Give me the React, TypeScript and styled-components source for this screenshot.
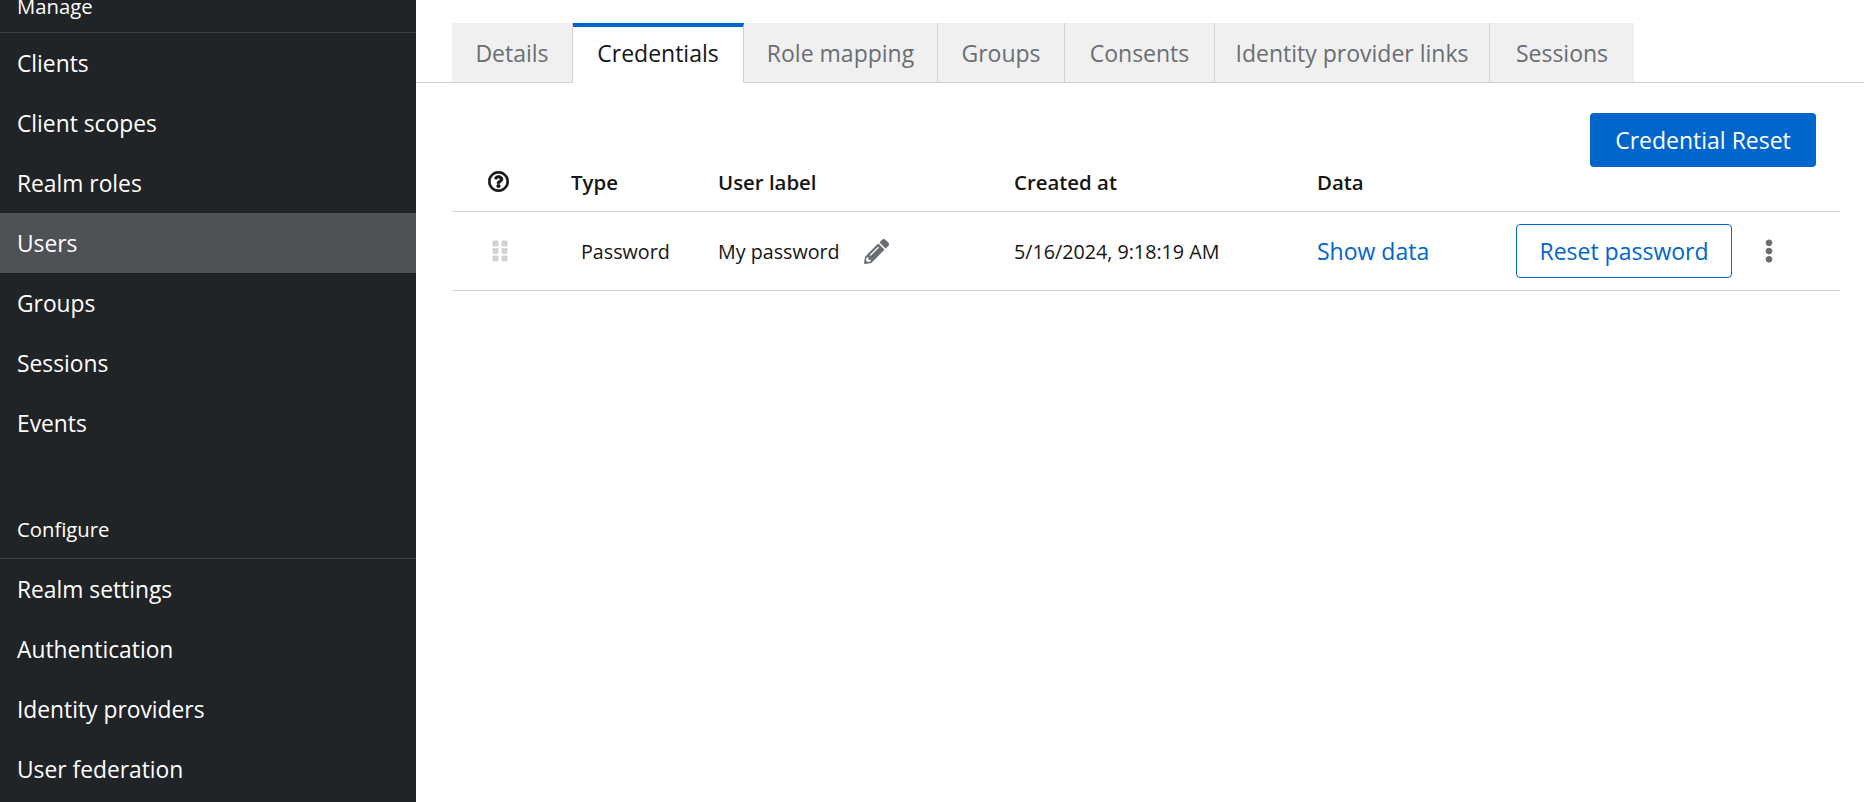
import React from 'react';
import styled, { createGlobalStyle } from 'styled-components';
import { FaEllipsisV, FaGripVertical, FaPencilAlt, FaRegQuestionCircle } from 'react-icons/fa';

const GlobalStyle = createGlobalStyle`
  html, body {
    margin: 0;
    height: 100%;
    overflow: hidden;
    background: #fff;
    font-family: "Open Sans", "Noto Sans", sans-serif;
  }
`;

const Page = styled.div`
  display: flex;
  width: 1864px;
  height: 802px;
  overflow: hidden;
`;

// Sidebar
const Sidebar = styled.nav`
  flex: 0 0 416px;
  height: 802px;
  overflow: hidden;
  background: #212427;
  color: #fff;
  font-size: 22.8px;
`;

const SectionTitle = styled.div<{ $first?: boolean }>`
  box-sizing: ${p => (p.$first ? 'content-box' : 'border-box')};
  height: ${p => (p.$first ? 32 : 58)}px;
  margin-top: ${p => (p.$first ? 0 : 48)}px;
  padding-left: 17px;
  padding-bottom: ${p => (p.$first ? 0 : 2)}px;
  display: flex;
  align-items: ${p => (p.$first ? 'flex-end' : 'center')};
  line-height: ${p => (p.$first ? 52 : 54)}px;
  border-bottom: 1px solid #3c3f42;
  font-size: 20.3px;
`;

const NavItem = styled.div<{ $active?: boolean }>`
  height: 60px;
  padding-left: 17px;
  display: flex;
  align-items: center;
  background: ${p => (p.$active ? '#4f5255' : 'transparent')};
`;

// Main area
const Main = styled.main`
  flex: 1;
  min-width: 0;
`;

const TabBar = styled.div`
  display: flex;
  height: 59px;
  margin-top: 23px;
  padding-left: 36px;
  border-bottom: 1px solid #d2d2d2;
`;

const Tab = styled.div<{ $active?: boolean; $w: number }>`
  box-sizing: border-box;
  width: ${p => p.$w}px;
  height: ${p => (p.$active ? 60 : 59)}px;
  padding-bottom: ${p => (p.$active ? 4 : 0)}px;
  display: flex;
  align-items: center;
  justify-content: center;
  font-size: 23px;
  color: ${p => (p.$active ? '#151515' : '#6a6e73')};
  background: ${p => (p.$active ? '#fff' : '#f0f0f0')};
  border-top: ${p => (p.$active ? '4px solid #0066cc' : 'none')};
  border-right: 1px solid #d2d2d2;
  &:last-child {
    border-right: none;
  }
`;

const Content = styled.div`
  padding: 0 24px 0 36px;
`;

const Toolbar = styled.div`
  display: flex;
  justify-content: flex-end;
  padding: 30px 24px 0 0;
`;

const PrimaryButton = styled.button`
  box-sizing: border-box;
  width: 226px;
  height: 54px;
  border: none;
  border-radius: 4px;
  background: #0066cc;
  color: #fff;
  font: inherit;
  font-size: 23px;
`;

const Row = styled.div<{ $head?: boolean }>`
  display: grid;
  grid-template-columns: 119px 147px 296px 303px 199px 1fr;
  align-items: center;
  height: ${p => (p.$head ? 45 : 78)}px;
  padding-bottom: ${p => (p.$head ? 14 : 0)}px;
  box-sizing: ${p => (p.$head ? 'border-box' : 'content-box')};
  border-bottom: 1px solid #d2d2d2;
  color: #151515;
  font-size: ${p => (p.$head ? 20.4 : 19.7)}px;
  font-weight: ${p => (p.$head ? 600 : 400)};
`;

const HelpCell = styled.div`
  display: flex;
  padding-left: 36px;
  font-size: 21px;
  margin-top: -1px;
  svg {
    stroke: currentColor;
    stroke-width: 18px;
  }
`;

const GripCell = styled.div`
  display: flex;
  padding-left: 36px;
  font-size: 24px;
  color: #d2d2d2;
`;

const TypeCell = styled.div`
  padding-left: 10px;
`;

const LabelCell = styled.div`
  display: flex;
  align-items: center;
  gap: 24px;
`;

const EditIcon = styled(FaPencilAlt)`
  font-size: 25px;
  color: #6a6e73;
`;

const LinkText = styled.a`
  color: #0066cc;
  font-size: 23px;
`;

const Actions = styled.div`
  display: flex;
  align-items: center;
  gap: 25px;
`;

const OutlineButton = styled.button`
  box-sizing: border-box;
  width: 216px;
  height: 54px;
  border: 1px solid #0066cc;
  border-radius: 4px;
  background: #fff;
  color: #0066cc;
  font: inherit;
  font-size: 23px;
`;

const Kebab = styled(FaEllipsisV)`
  font-size: 24px;
  color: #6a6e73;
`;

const manage = ['Clients', 'Client scopes', 'Realm roles', 'Users', 'Groups', 'Sessions', 'Events'];
const configure = ['Realm settings', 'Authentication', 'Identity providers', 'User federation'];
const tabs: [string, number][] = [
  ['Details', 121],
  ['Credentials', 171],
  ['Role mapping', 194],
  ['Groups', 127],
  ['Consents', 150],
  ['Identity provider links', 275],
  ['Sessions', 144],
];

export default function App() {
  return (
    <Page>
      <GlobalStyle />
      <Sidebar>
        <SectionTitle $first>Manage</SectionTitle>
        {manage.map(item => (
          <NavItem key={item} $active={item === 'Users'}>{item}</NavItem>
        ))}
        <SectionTitle>Configure</SectionTitle>
        {configure.map(item => (
          <NavItem key={item}>{item}</NavItem>
        ))}
      </Sidebar>
      <Main>
        <TabBar>
          {tabs.map(([name, w]) => (
            <Tab key={name} $w={w} $active={name === 'Credentials'}>{name}</Tab>
          ))}
        </TabBar>
        <Content>
          <Toolbar>
            <PrimaryButton>Credential Reset</PrimaryButton>
          </Toolbar>
          <Row $head>
            <HelpCell><FaRegQuestionCircle /></HelpCell>
            <div>Type</div>
            <div>User label</div>
            <div>Created at</div>
            <div>Data</div>
            <div />
          </Row>
          <Row>
            <GripCell><FaGripVertical /></GripCell>
            <TypeCell>Password</TypeCell>
            <LabelCell>My password <EditIcon /></LabelCell>
            <div>5/16/2024, 9:18:19 AM</div>
            <LinkText>Show data</LinkText>
            <Actions>
              <OutlineButton>Reset password</OutlineButton>
              <Kebab />
            </Actions>
          </Row>
        </Content>
      </Main>
    </Page>
  );
}
